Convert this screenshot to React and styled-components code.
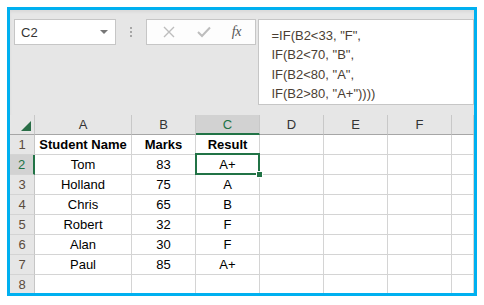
import React from "react";
import styled, { createGlobalStyle } from "styled-components";

const GlobalStyle = createGlobalStyle`
    body {
        margin: 0;
        background: #ffffff;
        font-family: "Liberation Sans", Arial, sans-serif;
    }
`;

const Page = styled.div`
    padding: 7px;
    width: 484px;
    height: 305px;
    box-sizing: border-box;
`;

const Frame = styled.div`
    width: 470px;
    height: 289px;
    box-sizing: border-box;
    border: 3px solid #00b0f0;
    background: #e6e6e6;
    overflow: hidden;
    display: flex;
    flex-direction: column;
`;

const Toolbar = styled.div`
    height: 105px;
    flex-shrink: 0;
    box-sizing: border-box;
    padding: 9px 0 0 4px;
    display: flex;
    align-items: flex-start;
    box-shadow: inset 0 2px 3px rgba(0,0,0,0.06);
`;

const NameBox = styled.div`
    width: 102px;
    height: 26px;
    box-sizing: border-box;
    background: #ffffff;
    border: 1px solid #c6c6c6;
    display: flex;
    align-items: center;
    justify-content: space-between;
    padding: 0 7px 0 6px;
    font-size: 13px;
    color: #333;
`;

const Caret = styled.span`
    width: 0;
    height: 0;
    border-left: 4px solid transparent;
    border-right: 4px solid transparent;
    border-top: 4px solid #777;
`;

const Grip = styled.div`
    width: 30px;
    height: 26px;
    display: flex;
    flex-direction: column;
    align-items: center;
    justify-content: center;
    gap: 2px;
    span {
        width: 2px;
        height: 2px;
        background: #a6a6a6;
    }
`;

const FxButtons = styled.div`
    width: 111px;
    height: 26px;
    box-sizing: border-box;
    background: #fdfdfd;
    border: 1px solid #c6c6c6;
    display: flex;
    align-items: center;
    justify-content: space-around;
    padding: 0 4px 0 6px;
`;

const Fx = styled.span`
    font-family: "Liberation Serif", "Times New Roman", serif;
    font-style: italic;
    font-size: 14px;
    color: #555;
    letter-spacing: -0.5px;
`;

const FormulaBox = styled.div`
    margin-left: 2px;
    width: 216px;
    height: 86px;
    box-sizing: border-box;
    background: #ffffff;
    border: 1px solid #c6c6c6;
    padding: 6px 0 0 12px;
    font-size: 13px;
    line-height: 19.3px;
    color: #4a3e33;
    white-space: pre;
`;

const Grid = styled.div`
    display: grid;
    grid-template-columns: 25px 97px 64px 64px 64px 64px 64px 1fr;
    grid-auto-rows: 20px;
    background: #ffffff;
`;

const Cell = styled.div`
    position: relative;
    box-sizing: border-box;
    border-right: 1px solid #d4d4d4;
    border-bottom: 1px solid #d4d4d4;
    display: flex;
    align-items: center;
    justify-content: center;
    font-size: 13px;
    font-weight: ${({ bold }) => (bold ? 700 : 400)};
    color: #000;
    ${({ selected }) => selected && `
        &::after {
            content: "";
            position: absolute;
            top: -2px;
            left: -1px;
            right: -1px;
            bottom: -1px;
            border: 2px solid #217346;
        }
        &::before {
            content: "";
            position: absolute;
            right: -4px;
            bottom: -4px;
            width: 5px;
            height: 5px;
            background: #217346;
            border: 1px solid #fff;
            z-index: 2;
        }
    `}
`;

const ColHead = styled.div`
    box-sizing: border-box;
    background: ${({ active }) => (active ? "#d2d2d2" : "#e6e6e6")};
    border-right: 1px solid #c8c8c8;
    border-bottom: ${({ active }) => (active ? "2px solid #217346" : "1px solid #a6a6a6")};
    display: flex;
    align-items: center;
    justify-content: center;
    font-size: 13px;
    color: ${({ active }) => (active ? "#217346" : "#333")};
`;

const Corner = styled(ColHead)`
    position: relative;
    &::after {
        content: "";
        position: absolute;
        right: 3px;
        bottom: 3px;
        width: 0;
        height: 0;
        border-left: 10px solid transparent;
        border-bottom: 10px solid #2a6e47;
    }
`;

const RowHead = styled.div`
    box-sizing: border-box;
    background: ${({ active }) => (active ? "#d2d2d2" : "#e6e6e6")};
    border-right: ${({ active }) => (active ? "2px solid #217346" : "1px solid #c6c6c6")};
    border-bottom: 1px solid #d4d4d4;
    display: flex;
    align-items: center;
    justify-content: center;
    font-size: 13px;
    color: ${({ active }) => (active ? "#217346" : "#5a4b3c")};
`;

const columns = ["A", "B", "C", "D", "E", "F", ""];

const rows = [
    ["Student Name", "Marks", "Result"],
    ["Tom", "83", "A+"],
    ["Holland", "75", "A"],
    ["Chris", "65", "B"],
    ["Robert", "32", "F"],
    ["Alan", "30", "F"],
    ["Paul", "85", "A+"],
    ["", "", ""],
];

const formula = `=IF(B2<33, "F",
IF(B2<70, "B",
IF(B2<80, "A",
IF(B2>80, "A+"))))`;

const App = () => {
    return (
        <Page>
            <GlobalStyle />
            <Frame>
                <Toolbar>
                    <NameBox>
                        C2
                        <Caret />
                    </NameBox>
                    <Grip>
                        <span />
                        <span />
                        <span />
                    </Grip>
                    <FxButtons>
                        <svg width="12" height="12" viewBox="0 0 12 12">
                            <path d="M1 1 L11 11 M11 1 L1 11" stroke="#bdbdbd" strokeWidth="1.4" />
                        </svg>
                        <svg width="14" height="12" viewBox="0 0 14 12">
                            <path d="M1 6 L5 10 L13 1.5" stroke="#bdbdbd" strokeWidth="2" fill="none" />
                        </svg>
                        <Fx>fx</Fx>
                    </FxButtons>
                    <FormulaBox>{formula}</FormulaBox>
                </Toolbar>
                <Grid>
                    <Corner />
                    {columns.map((c, i) => (
                        <ColHead key={i} active={c === "C"}>{c}</ColHead>
                    ))}
                    {rows.map((r, ri) => (
                        <React.Fragment key={ri}>
                            <RowHead active={ri === 1}>{ri + 1}</RowHead>
                            {r.map((v, ci) => (
                                <Cell key={ci} bold={ri === 0} selected={ri === 1 && ci === 2}>{v}</Cell>
                            ))}
                            <Cell />
                            <Cell />
                            <Cell />
                            <Cell />
                        </React.Fragment>
                    ))}
                </Grid>
            </Frame>
        </Page>
    );
};

export default App;
